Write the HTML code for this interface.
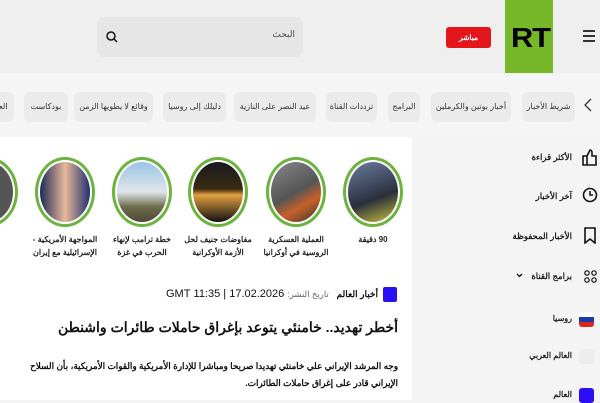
<!DOCTYPE html>
<html><head><meta charset="utf-8"><style>
*{margin:0;padding:0;box-sizing:border-box}
body{width:600px;height:400px;overflow:hidden;background:#f4f4f4;font-family:"Liberation Sans","Noto Sans CJK SC",sans-serif;position:relative;color:#111}
.a{position:absolute}
.pill{position:absolute;top:92px;height:30px;background:#ebebeb;border-radius:6px;font-size:8px;color:#333;line-height:30px;text-align:center;white-space:nowrap;overflow:hidden}
.c{position:absolute;top:157px;width:60px;height:70px;border:3px solid #6db33f;border-radius:50%;background:#fff;padding:2px}
.c div{width:100%;height:100%;border-radius:50%}
.cap{position:absolute;top:233px;width:76px;font-size:8px;line-height:13px;text-align:center;direction:rtl;font-weight:bold;color:#222}
.si{position:absolute;right:28px;font-size:8.5px;direction:rtl;font-weight:bold;color:#222}
</style></head><body>
<div class="a" style="left:0;top:0;width:600px;height:73px;background:#efefef"></div>
<div class="a" style="left:505px;top:0;width:48px;height:73px;background:#77b82a"></div>
<div class="a" style="left:511px;top:22px;font:900 28px 'Liberation Sans',sans-serif;color:#000;letter-spacing:-1px;transform:scaleX(1.1);transform-origin:left">RT</div>
<div class="a" style="left:583px;top:30px;width:12px;height:2px;background:#333;box-shadow:0 5px 0 #333,0 10px 0 #333"></div>
<div class="a" style="left:446px;top:27px;width:45px;height:21px;background:#e3171b;border-radius:3px;color:#fff;font-size:7.5px;font-weight:bold;text-align:center;line-height:21px">مباشر</div>
<div class="a" style="left:97px;top:17px;width:206px;height:40px;background:#e6e6e6;border-radius:7px"></div>
<div class="a" style="left:250px;top:29px;width:45px;text-align:right;font-size:9px;color:#444">البحث</div>
<svg class="a" style="left:106px;top:31px" width="12" height="12" viewBox="0 0 12 12"><circle cx="5" cy="5" r="4" fill="none" stroke="#111" stroke-width="1.5"/><path d="M8 8l3 3" stroke="#111" stroke-width="1.5"/></svg>
<div class="a" style="left:0;top:73px;width:600px;height:64px;background:#f5f5f5"></div>
<svg class="a" style="left:584px;top:98px" width="8" height="14" viewBox="0 0 8 14"><path d="M7 1L1 7l6 6" fill="none" stroke="#333" stroke-width="1.3"/></svg>
<div class="pill" style="left:522px;width:53px">شريط الأخبار</div>
<div class="pill" style="left:431px;width:80px">أخبار بوتين والكرملين</div>
<div class="pill" style="left:388px;width:32px">البرامج</div>
<div class="pill" style="left:326px;width:51px">ترددات القناة</div>
<div class="pill" style="left:234px;width:82px">عيد النصر على النازية</div>
<div class="pill" style="left:163px;width:63px">دليلك إلى روسيا</div>
<div class="pill" style="left:74px;width:79px">وقائع لا يطويها الزمن</div>
<div class="pill" style="left:24px;width:44px">بودكاست</div>
<div class="pill" style="left:-10px;width:24px">العا</div>
<div class="a" style="left:0;top:137px;width:412px;height:263px;background:#fff"></div>
<div class="c" style="left:343px"><div style="background:linear-gradient(160deg,#6b7da0,#2a2f3c 60%,#c9c43a)"></div></div>
<div class="c" style="left:266px"><div style="background:linear-gradient(150deg,#888,#555 50%,#c8602a 70%,#333)"></div></div>
<div class="c" style="left:188px"><div style="background:linear-gradient(#1a1a22,#3a2a10 45%,#e0a040 55%,#111)"></div></div>
<div class="c" style="left:112px"><div style="background:linear-gradient(#9cc4e8,#dfe6ea 50%,#6d6a4a 75%,#4c4a38)"></div></div>
<div class="c" style="left:35px"><div style="background:linear-gradient(90deg,#1f2a55,#e7b89a 50%,#223070)"></div></div>
<div class="c" style="left:-42px"><div style="background:#555"></div></div>
<div class="cap" style="left:335px">90 دقيقة</div>
<div class="cap" style="left:258px">العملية العسكرية الروسية في أوكرانيا</div>
<div class="cap" style="left:180px">مفاوضات جنيف لحل الأزمة الأوكرانية</div>
<div class="cap" style="left:104px">خطة ترامب لإنهاء الحرب في غزة</div>
<div class="cap" style="left:27px">المواجهة الأمريكية - الإسرائيلية مع إيران</div>
<div class="a" style="left:383px;top:287px;width:14px;height:15px;background:#2b0ef5;border-radius:2px"></div>
<div class="a" style="left:150px;top:288px;width:228px;text-align:right;font-size:11px;direction:rtl;white-space:nowrap"><b style="font-size:9px">أخبار العالم</b> <span style="color:#666;font-size:8.5px">&nbsp; تاريخ النشر:</span> 17.02.2026 | 11:35 GMT</div>
<div class="a" style="left:60px;top:319px;width:338px;text-align:right;font-size:14px;font-weight:bold;direction:rtl;white-space:nowrap">أخطر تهديد.. خامنئي يتوعد بإغراق حاملات طائرات واشنطن</div>
<div class="a" style="left:14px;top:358px;width:384px;font-size:8.8px;font-weight:bold;line-height:17px;direction:rtl">وجه المرشد الإيراني علي خامنئي تهديدا صريحا ومباشرا للإدارة الأمريكية والقوات الأمريكية، بأن السلاح الإيراني قادر على إغراق حاملات الطائرات.</div>
<svg class="a" style="left:582px;top:148px" width="16" height="18" viewBox="0 0 16 18"><path d="M1 8h4v9H1zM5 8l3-6c2 0 2 2 2 3v3h4v9H5" fill="none" stroke="#111" stroke-width="1.6"/></svg>
<div class="si" style="top:152px">الأكثر قراءة</div>
<svg class="a" style="left:582px;top:187px" width="16" height="16" viewBox="0 0 16 16"><circle cx="8" cy="8" r="6.5" fill="none" stroke="#111" stroke-width="1.6"/><path d="M8 4v4h3" fill="none" stroke="#111" stroke-width="1.5"/></svg>
<div class="si" style="top:191px">آخر الأخبار</div>
<svg class="a" style="left:584px;top:227px" width="12" height="17" viewBox="0 0 12 17"><path d="M1 1h10v15l-5-4-5 4z" fill="none" stroke="#111" stroke-width="1.6"/></svg>
<div class="si" style="top:231px">الأخبار المحفوظة</div>
<svg class="a" style="left:584px;top:270px" width="13" height="13" viewBox="0 0 13 13" fill="none" stroke="#111" stroke-width="1.2"><circle cx="3" cy="3" r="2.2"/><circle cx="10" cy="3" r="2.2"/><circle cx="3" cy="10" r="2.2"/><circle cx="10" cy="10" r="2.2"/></svg>
<div class="si" style="top:271px">برامج القناة</div>
<svg class="a" style="left:516px;top:273px" width="7" height="5" viewBox="0 0 7 5"><path d="M1 1l2.5 2.5L6 1" fill="none" stroke="#111" stroke-width="1.3"/></svg>
<div class="a" style="left:579px;top:312px;width:15px;height:15px;border-radius:3px;overflow:hidden;background:linear-gradient(#fff 33%,#1c3aa9 33%,#1c3aa9 66%,#d52b1e 66%)"></div>
<div class="si" style="top:314px;font-size:8px">روسيا</div>
<div class="a" style="left:579px;top:349px;width:15px;height:15px;border-radius:3px;background:#ececec"></div>
<div class="si" style="top:351px;font-size:8px">العالم العربي</div>
<div class="a" style="left:579px;top:388px;width:15px;height:15px;border-radius:3px;background:#2b0ef5"></div>
<div class="si" style="top:390px;font-size:8px">العالم</div>
</body></html>
